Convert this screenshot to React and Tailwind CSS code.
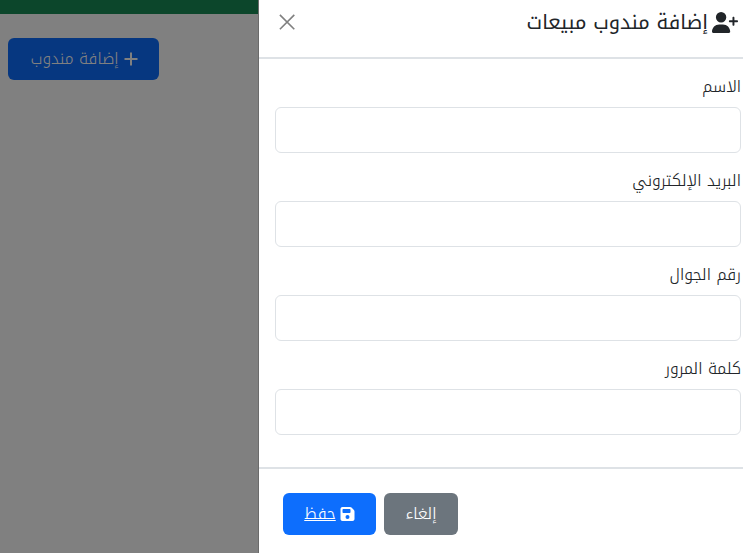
import React from "react";

function Field({ label }) {
  return (
    <div className="flex flex-col items-stretch h-[94px] pt-[13px]">
      <label className="h-[32px] text-[16px] font-[350] leading-[24px] text-[#212529] text-right">{label}</label>
      <input className="h-[46px] w-full rounded-[6px] border border-[#dee2e6] bg-white" />
    </div>
  );
}

export default function App() {
  return (
    <div dir="ltr" className="flex h-[553px] w-[743px] overflow-hidden bg-white font-['Noto_Kufi_Arabic','Cairo',sans-serif]">
      <div className="flex h-full w-[258px] shrink-0 flex-col bg-[#808080]">
        <div className="h-[14px] bg-[#0c462b]" />
        <div className="pl-2 pt-6">
          <button dir="rtl" className="flex h-[42px] w-[151px] items-center justify-center gap-1 rounded-[6px] bg-[#063780] pl-[2px] text-[16px] font-[350] text-[#808080]">
            <svg width="16" height="16" viewBox="0 0 16 16" fill="none" stroke="currentColor" strokeWidth="2"><path d="M8 1.500v13M1.500 8h13" /></svg>
            <span>إضافة مندوب</span>
          </button>
        </div>
      </div>
      <div className="flex h-full w-[485px] flex-col border-l border-[#6b6b6b] bg-white">
        <div className="flex h-[59px] shrink-0 items-start justify-between border-b-2 border-[#dee2e6] pl-[20px] pr-[5px] pt-[5px]">
          <svg className="mt-[9px]" width="16" height="16" viewBox="0 0 16 16" fill="none" stroke="#808080" strokeWidth="1.8"><path d="M1 1l16 16M17 1L1 17" transform="scale(0.9)" /></svg>
          <div dir="rtl" className="flex items-center gap-1 text-[20px] font-normal leading-[34px] text-[#212529]">
            <svg width="26" height="21" viewBox="0 0 640 512" fill="#212529"><path d="M224 256a128 128 0 1 0 0-256 128 128 0 1 0 0 256zm-45.700 48C79.800 304 0 383.800 0 482.300 0 498.700 13.300 512 29.700 512h388.600c16.400 0 29.700-13.300 29.700-29.700C448 383.800 368.200 304 269.700 304h-91.400zM504 312v-64h-64c-13.300 0-24-10.700-24-24s10.700-24 24-24h64v-64c0-13.300 10.700-24 24-24s24 10.700 24 24v64h64c13.300 0 24 10.700 24 24s-10.700 24-24 24h-64v64c0 13.300-10.700 24-24 24s-24-10.700-24-24z" /></svg>
            <span>إضافة مندوب مبيعات</span>
          </div>
        </div>
        <div className="h-[410px] shrink-0 border-b-2 border-[#dee2e6] pl-4 pr-[2px] pt-[3px]">
          <Field label="الاسم" />
          <Field label="البريد الإلكتروني" />
          <Field label="رقم الجوال" />
          <Field label="كلمة المرور" />
        </div>
        <div className="flex gap-2 pl-6 pt-[24px]">
          <button dir="rtl" className="flex h-[42px] w-[93px] items-center justify-center gap-1 rounded-[6px] bg-[#0d6efd] text-[16px] font-[350] text-white underline">
            <svg width="15" height="16" viewBox="0 0 448 512" fill="#ffffff"><path d="M64 32C28.700 32 0 60.700 0 96v320c0 35.300 28.700 64 64 64h320c35.300 0 64-28.700 64-64V173.300c0-17-6.700-33.300-18.700-45.300L352 50.700C340 38.700 323.700 32 306.700 32H64zm0 96c0-17.700 14.300-32 32-32h192c17.700 0 32 14.300 32 32v64c0 17.700-14.300 32-32 32H96c-17.700 0-32-14.300-32-32v-64zm160 160a64 64 0 1 1 0 128 64 64 0 1 1 0-128z" /></svg>
            <span>حفظ</span>
          </button>
          <button dir="rtl" className="flex h-[42px] w-[74px] items-center justify-center rounded-[6px] bg-[#6c757d] text-[16px] font-[350] text-white">إلغاء</button>
        </div>
      </div>
    </div>
  );
}
